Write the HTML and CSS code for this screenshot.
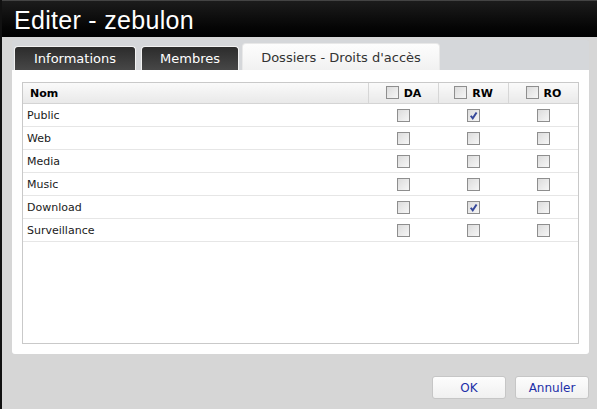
FILE: index.html
```html
<!DOCTYPE html>
<html lang="fr">
<head>
  <meta charset="UTF-8" />
  <title>Editer - zebulon</title>
  <link rel="stylesheet" href="styles.css">
</head>
<body>
  <div class="window">
    <div class="titlebar">Editer - zebulon</div>

    <div class="panel">
      <div class="tabs">
        <div class="tab">Informations</div>
        <div class="tab tab-members">Membres</div>
        <div class="tab active">Dossiers - Droits d'accès</div>
      </div>

      <div class="content">
        <div class="grid">
          <table>
            <thead>
              <tr>
                <th class="name">Nom</th>
                <th class="col"><span class="cb"></span>DA</th>
                <th class="col"><span class="cb"></span>RW</th>
                <th class="col"><span class="cb"></span>RO</th>
              </tr>
            </thead>
            <tbody>
              <tr>
                <td class="name">Public</td>
                <td><span class="cb"></span></td>
                <td><span class="cb checked"><svg viewBox="0 0 10 10"><path d="M2.5 5.2 L4.3 7.6 L7.8 2.2"/></svg></span></td>
                <td><span class="cb"></span></td>
              </tr>
              <tr>
                <td class="name">Web</td>
                <td><span class="cb"></span></td>
                <td><span class="cb"></span></td>
                <td><span class="cb"></span></td>
              </tr>
              <tr>
                <td class="name">Media</td>
                <td><span class="cb"></span></td>
                <td><span class="cb"></span></td>
                <td><span class="cb"></span></td>
              </tr>
              <tr>
                <td class="name">Music</td>
                <td><span class="cb"></span></td>
                <td><span class="cb"></span></td>
                <td><span class="cb"></span></td>
              </tr>
              <tr>
                <td class="name">Download</td>
                <td><span class="cb"></span></td>
                <td><span class="cb checked"><svg viewBox="0 0 10 10"><path d="M2.5 5.2 L4.3 7.6 L7.8 2.2"/></svg></span></td>
                <td><span class="cb"></span></td>
              </tr>
              <tr>
                <td class="name">Surveillance</td>
                <td><span class="cb"></span></td>
                <td><span class="cb"></span></td>
                <td><span class="cb"></span></td>
              </tr>
            </tbody>
          </table>
        </div>
      </div>
    </div>

    <div class="footer">
      <button>OK</button>
      <button>Annuler</button>
    </div>
  </div>
</body>
</html>
```

FILE: styles.css
```css
html, body {
  margin: 0;
  height: 100%;
}
body {
  background: #d6d6d6;
  font-family: "DejaVu Sans", Verdana, sans-serif;
  overflow: hidden;
}
.window {
  height: 409px;
  border-left: 2px solid #111;
  display: flex;
  flex-direction: column;
  box-sizing: border-box;
}
.titlebar {
  height: 37px;
  line-height: 38px;
  padding-left: 12px;
  color: #fff;
  font-family: "Liberation Sans", Arial, sans-serif;
  font-size: 25px;
  letter-spacing: 0.3px;
  background: linear-gradient(#1c1c1c, #060606 70%, #000);
  border-top: 1px solid #444;
  box-sizing: border-box;
}
.panel {
  margin: 3px 8px 0 10px;
  background: #d5d7da;
  border-radius: 3px;
  overflow: hidden;
}
.tabs {
  display: flex;
  align-items: flex-end;
  gap: 5px;
  padding: 3px 0 0 2px;
  height: 27px;
}
.tab {
  height: 23px;
  line-height: 24px;
  padding: 0 14px;
  font-size: 13px;
  color: #fff;
  background: linear-gradient(#2c2c2c, #474747);
  border: 1px solid #f2f2f2;
  border-bottom: none;
  border-radius: 4px 4px 0 0;
  width: 92px;
  text-align: center;
}
.tab-members {
  width: 68px;
}
.tab.active {
  height: 26px;
  line-height: 28px;
  width: 168px;
  margin-left: -2px;
  color: #333;
  background: linear-gradient(#fdfdfd, #f1f1f1);
  border-color: #e8e8e8;
}
.content {
  background: #fff;
  padding: 12px 10px 10px 10px;
}
.grid {
  height: 260px;
  border: 1px solid #c9c9c9;
}
table {
  width: 100%;
  border-collapse: collapse;
  font-size: 11px;
  color: #1a1a1a;
}
th {
  height: 20px;
  padding: 0;
  font-weight: bold;
  color: #000;
  background: linear-gradient(#fafafa, #e9e9e9);
  border-bottom: 1px solid #d4d4d4;
}
th.name {
  text-align: left;
  padding-left: 7px;
}
th.col {
  width: 69px;
  border-left: 1px solid #d6d6d6;
}
th .cb {
  margin-right: 5px;
  vertical-align: -2px;
}
td {
  height: 22px;
  padding: 0;
  text-align: center;
  border-bottom: 1px solid #e6e6e6;
}
td.name {
  text-align: left;
  padding-left: 4px;
}
.cb {
  display: inline-block;
  width: 11px;
  height: 11px;
  border: 1px solid #8e8e8e;
  background: linear-gradient(135deg, #dcdcdc, #f6f6f6);
  vertical-align: middle;
  position: relative;
}
.cb svg {
  position: absolute;
  left: 0;
  top: 0;
  width: 11px;
  height: 11px;
  fill: none;
  stroke: #36489a;
  stroke-width: 1.8;
}
.footer {
  display: flex;
  justify-content: flex-end;
  gap: 9px;
  padding: 22px 8px 0 0;
}
button {
  width: 74px;
  height: 23px;
  font-family: "DejaVu Sans", Verdana, sans-serif;
  font-size: 12px;
  color: #1c2fa8;
  background: linear-gradient(#fdfdfd, #f0f0f0);
  border: 1px solid #c6c6c6;
  border-radius: 3px;
  padding: 0;
}
```
